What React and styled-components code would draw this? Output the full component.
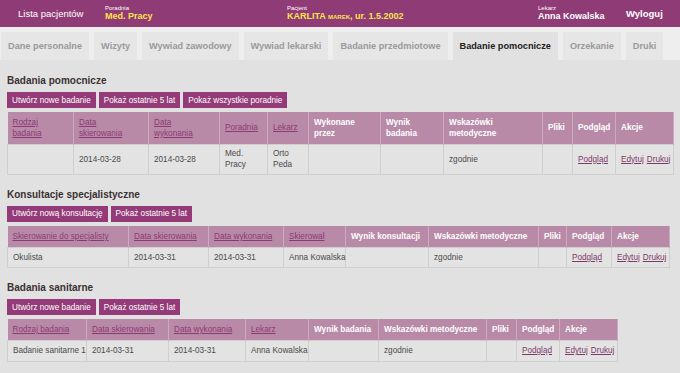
import React from "react";
import styled, { createGlobalStyle } from "styled-components";

const GlobalStyle = createGlobalStyle`
  body {
    margin: 0;
    background: #e1e1e1;
    font-family: "Liberation Sans", Arial, sans-serif;
  }
`;

const Page = styled.div`
  width: 680px;
  height: 373px;
  overflow: hidden;
  background: #e1e1e1;
`;

const TopBar = styled.div`
  display: grid;
  grid-template-columns: 87px 182px 251px 88px auto;
  align-items: center;
  height: 27px;
  padding-left: 18px;
  background: #8f3b76;
  color: #fff;
`;

const TopLink = styled.div`
  font-size: 9.5px;
  font-weight: ${(p) => (p.bold ? "bold" : "normal")};
`;

const Field = styled.div`
  display: flex;
  flex-direction: column;
  line-height: 1;
  padding-bottom: 2px;
`;

const FieldLabel = styled.span`
  font-size: 6px;
  margin-bottom: 1px;
`;

const FieldValue = styled.span`
  font-size: 9px;
  font-weight: bold;
  color: ${(p) => (p.yellow ? "#ffe34a" : "#fff")};
`;

const SmallCaps = styled.span`
  font-size: 6px;
`;

const TabBar = styled.div`
  display: flex;
  gap: 5px;
  height: 33px;
  padding: 5px 0 0 1px;
  box-sizing: border-box;
  background: #eeeeee;
`;

const Tab = styled.div`
  display: flex;
  align-items: center;
  padding: 0 7px;
  white-space: nowrap;
  font-size: 9.2px;
  font-weight: bold;
  color: ${(p) => (p.active ? "#222" : "#9a9a9a")};
  background: ${(p) => (p.active ? "#e1e1e1" : "#e6e6e6")};
`;

const Content = styled.div`
  padding: 14px 7px 0;
`;

const Section = styled.section`
  & + & {
    margin-top: 13px;
  }
`;

const Heading = styled.h2`
  margin: 0 0 4px;
  font-size: 10px;
  line-height: 14px;
  font-weight: bold;
  color: #3b3131;
`;

const ButtonRow = styled.div`
  display: flex;
  gap: 3px;
  margin-bottom: 4px;
`;

const Button = styled.button`
  height: 16px;
  padding: 0 5px;
  border: 0;
  background: #943a78;
  color: #fff;
  font-family: inherit;
  font-size: 8.2px;
`;

const Table = styled.table`
  border-collapse: collapse;
  table-layout: fixed;
  font-size: 8.2px;
`;

const Th = styled.th`
  height: ${(p) => p.h}px;
  padding: 0 5px;
  text-align: left;
  white-space: nowrap;
  overflow: hidden;
  font-weight: bold;
  line-height: 11px;
  color: #fff;
  background: #b98aa8;
  border-right: 1px solid #cbaabf;
  box-sizing: border-box;
`;

const SortLink = styled.a`
  color: #8b3a72;
  font-weight: normal;
  text-decoration: underline;
`;

const Td = styled.td`
  height: ${(p) => p.h}px;
  padding: 0 4px 0 5px;
  white-space: nowrap;
  line-height: 11px;
  color: #4a4a4a;
  background: #e3e3e3;
  border: 1px solid #cfcfcf;
  box-sizing: border-box;
`;

const RowLink = styled.a`
  color: #7d3a68;
  text-decoration: underline;
  & + & {
    margin-left: 3px;
  }
`;

const DataTable = ({ columns, row, headH, rowH }) => (
  <Table style={{ width: columns.reduce((s, c) => s + c.w, 0) }}>
    <colgroup>
      {columns.map((c, i) => (
        <col key={i} style={{ width: c.w }} />
      ))}
    </colgroup>
    <thead>
      <tr>
        {columns.map((c, i) => (
          <Th key={i} h={headH}>
            {c.sort ? <SortLink>{c.label}</SortLink> : c.label}
          </Th>
        ))}
      </tr>
    </thead>
    <tbody>
      <tr>
        {row.map((cell, i) => (
          <Td key={i} h={rowH}>
            {cell}
          </Td>
        ))}
      </tr>
    </tbody>
  </Table>
);

const actions = (
  <>
    <RowLink>Edytuj</RowLink>
    <RowLink>Drukuj</RowLink>
  </>
);

const TABS = [
  "Dane personalne",
  "Wizyty",
  "Wywiad zawodowy",
  "Wywiad lekarski",
  "Badanie przedmiotowe",
  "Badanie pomocnicze",
  "Orzekanie",
  "Druki",
];

const badaniaCols = [
  { label: <>Rodzaj<br />badania</>, sort: true, w: 66 },
  { label: <>Data<br />skierowania</>, sort: true, w: 75 },
  { label: <>Data<br />wykonania</>, sort: true, w: 71 },
  { label: "Poradnia", sort: true, w: 48 },
  { label: "Lekarz", sort: true, w: 41 },
  { label: <>Wykonane<br />przez</>, w: 72 },
  { label: <>Wynik<br />badania</>, w: 63 },
  { label: <>Wskazówki<br />metodyczne</>, w: 99 },
  { label: "Pliki", w: 30 },
  { label: "Podgląd", w: 43 },
  { label: "Akcje", w: 58 },
];

const konsultacjeCols = [
  { label: "Skierowanie do specjalisty", sort: true, w: 121 },
  { label: "Data skierowania", sort: true, w: 80 },
  { label: "Data wykonania", sort: true, w: 75 },
  { label: "Skierował", sort: true, w: 62 },
  { label: "Wynik konsultacji", w: 83 },
  { label: "Wskazówki metodyczne", w: 110 },
  { label: "Pliki", w: 28 },
  { label: "Podgląd", w: 45 },
  { label: "Akcje", w: 58 },
];

const sanitarneCols = [
  { label: "Rodzaj badania", sort: true, w: 79 },
  { label: "Data skierowania", sort: true, w: 82 },
  { label: "Data wykonania", sort: true, w: 77 },
  { label: "Lekarz", sort: true, w: 63 },
  { label: "Wynik badania", w: 70 },
  { label: "Wskazówki metodyczne", w: 108 },
  { label: "Pliki", w: 30 },
  { label: "Podgląd", w: 43 },
  { label: "Akcje", w: 58 },
];

export default function App() {
  return (
    <Page>
      <GlobalStyle />
      <TopBar>
        <TopLink>Lista pacjentów</TopLink>
        <Field>
          <FieldLabel>Poradnia</FieldLabel>
          <FieldValue yellow>Med. Pracy</FieldValue>
        </Field>
        <Field>
          <FieldLabel>Pacjent</FieldLabel>
          <FieldValue yellow>
            KARLITA <SmallCaps>MAREK</SmallCaps>, ur. 1.5.2002
          </FieldValue>
        </Field>
        <Field>
          <FieldLabel>Lekarz</FieldLabel>
          <FieldValue>Anna Kowalska</FieldValue>
        </Field>
        <TopLink bold>Wyloguj</TopLink>
      </TopBar>

      <TabBar>
        {TABS.map((t) => (
          <Tab key={t} active={t === "Badanie pomocnicze"}>
            {t}
          </Tab>
        ))}
      </TabBar>

      <Content>
        <Section>
          <Heading>Badania pomocnicze</Heading>
          <ButtonRow>
            <Button>Utwórz nowe badanie</Button>
            <Button>Pokaż ostatnie 5 lat</Button>
            <Button>Pokaż wszystkie poradnie</Button>
          </ButtonRow>
          <DataTable
            columns={badaniaCols}
            headH={32}
            rowH={30}
            row={[
              "",
              "2014-03-28",
              "2014-03-28",
              <>Med.<br />Pracy</>,
              <>Orto<br />Peda</>,
              "",
              "",
              "zgodnie",
              "",
              <RowLink>Podgląd</RowLink>,
              actions,
            ]}
          />
        </Section>

        <Section>
          <Heading>Konsultacje specjalistyczne</Heading>
          <ButtonRow>
            <Button>Utwórz nową konsultację</Button>
            <Button>Pokaż ostatnie 5 lat</Button>
          </ButtonRow>
          <DataTable
            columns={konsultacjeCols}
            headH={22}
            rowH={20}
            row={[
              "Okulista",
              "2014-03-31",
              "2014-03-31",
              "Anna Kowalska",
              "",
              "zgodnie",
              "",
              <RowLink>Podgląd</RowLink>,
              actions,
            ]}
          />
        </Section>

        <Section>
          <Heading>Badania sanitarne</Heading>
          <ButtonRow>
            <Button>Utwórz nowe badanie</Button>
            <Button>Pokaż ostatnie 5 lat</Button>
          </ButtonRow>
          <DataTable
            columns={sanitarneCols}
            headH={21}
            rowH={21}
            row={[
              "Badanie sanitarne 1",
              "2014-03-31",
              "2014-03-31",
              "Anna Kowalska",
              "",
              "zgodnie",
              "",
              <RowLink>Podgląd</RowLink>,
              actions,
            ]}
          />
        </Section>
      </Content>
    </Page>
  );
}
